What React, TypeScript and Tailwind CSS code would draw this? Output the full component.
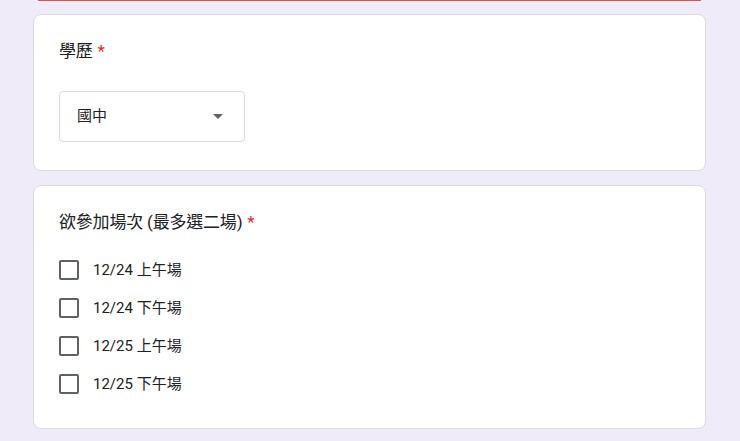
import { useState } from "react";

const FONT = "font-['Roboto','Noto_Sans_CJK_TC',sans-serif]";

const SESSIONS = ["12/24 上午場", "12/24 下午場", "12/25 上午場", "12/25 下午場"];

function Required() {
  return <span className="ml-[5px] text-[#d93025]">*</span>;
}

export default function App() {
  const [picked, setPicked] = useState<string[]>([]);

  const toggle = (s: string) =>
    setPicked((p) => (p.includes(s) ? p.filter((x) => x !== s) : [...p, s]));

  return (
    <div className={`${FONT} min-h-[441px] bg-[#f0ebf8] text-[#202124]`}>
      <div className="flex w-[673px] flex-col pl-[33px] box-content">
        {/* previous card's bottom edge */}
        <div className="mx-[5px] h-px bg-[#d93025]/80" />

        <div className="mt-[13px] rounded-lg border border-[#dadce0] bg-white pl-[25px] pr-6 pt-6 pb-[28px]">
          <div className="text-[17px] leading-6 tracking-[-0.2px]">
            學歷
            <Required />
          </div>
          <button
            type="button"
            className="mt-[28px] flex h-[51px] w-[186px] items-center justify-between rounded border border-[#dadce0] pl-[17px] pr-[21px] text-[15px]"
          >
            <span>國中</span>
            <svg width="10" height="5" viewBox="0 0 10 5">
              <path d="M0 0h10L5 5z" fill="#5f6368" />
            </svg>
          </button>
        </div>

        <div className="mt-[14px] rounded-lg border border-[#dadce0] bg-white pl-[25px] pr-6 pt-6 pb-[25px]">
          <div className="text-[17px] leading-6 tracking-[-0.2px]">
            欲參加場次 (最多選二場)
            <Required />
          </div>
          <ul className="mt-[17px] flex flex-col">
            {SESSIONS.map((s) => (
              <li key={s}>
                <label className="flex h-[38px] cursor-pointer items-center gap-[14px] text-[15px]">
                  <span
                    onClick={() => toggle(s)}
                    className={`h-5 w-5 shrink-0 rounded-[2px] border-2 ${
                      picked.includes(s) ? "border-[#673ab7] bg-[#673ab7]" : "border-[#5f6368]"
                    }`}
                  />
                  <span>{s}</span>
                </label>
              </li>
            ))}
          </ul>
        </div>
      </div>
    </div>
  );
}
